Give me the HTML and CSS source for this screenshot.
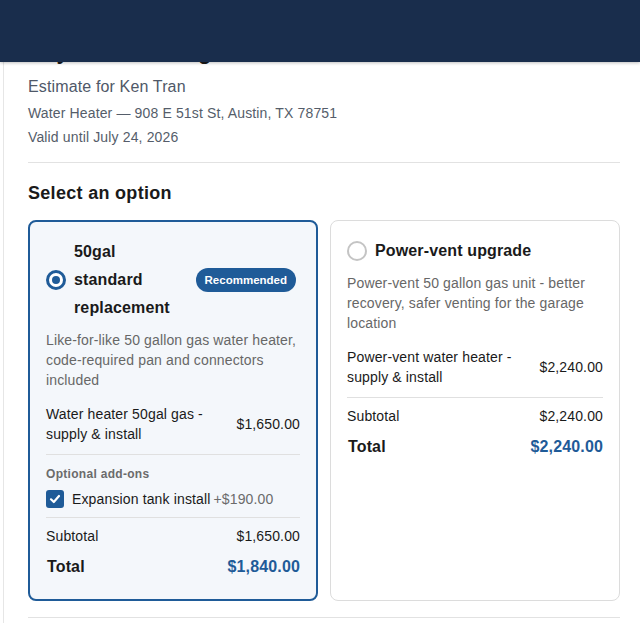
FILE: index.html
```html
<!DOCTYPE html>
<html>
	<head>
		<meta charset="utf-8">
		<title>Estimate</title>
		<link rel="stylesheet" href="styles.css">
	</head>
	<body>
		<header class="topbar"></header>
		<main class="page">
			<h1 class="brand">Bay Area Heating</h1>
			<p class="customer">Estimate for Ken Tran</p>
			<p class="meta">Water Heater — 908 E 51st St, Austin, TX 78751</p>
			<p class="meta">Valid until July 24, 2026</p>
			<hr class="rule">
			<h2 class="section-title">Select an option</h2>
			<div class="options">
				<div class="option selected">
					<div class="option-head">
						<span class="radio checked"></span>
						<span class="option-name">50gal standard replacement</span>
						<span class="badge">Recommended</span>
					</div>
					<p class="option-desc">Like-for-like 50 gallon gas water heater, code-required pan and connectors included</p>
					<div class="line">
						<span class="line-name">Water heater 50gal gas - supply &amp; install</span>
						<span class="amt">$1,650.00</span>
					</div>
					<div class="addons">
						<div class="addons-title">Optional add-ons</div>
						<div class="addon">
							<span class="check">
								<svg width="12" height="12" viewBox="0 0 12 12"><path d="M2 6.3 L4.8 9 L10 3" fill="none" stroke="#fff" stroke-width="2.2" stroke-linecap="round" stroke-linejoin="round"/></svg>
							</span>
							<span>Expansion tank install</span>
							<span class="addon-price">+$190.00</span>
						</div>
					</div>
					<div class="totals">
						<div class="row"><span>Subtotal</span><span>$1,650.00</span></div>
						<div class="row total"><span>Total</span><span class="total-amt">$1,840.00</span></div>
					</div>
				</div>
				<div class="option">
					<div class="option-head">
						<span class="radio"></span>
						<span class="option-name">Power-vent upgrade</span>
					</div>
					<p class="option-desc">Power-vent 50 gallon gas unit - better recovery, safer venting for the garage location</p>
					<div class="line">
						<span class="line-name">Power-vent water heater - supply &amp; install</span>
						<span class="amt">$2,240.00</span>
					</div>
					<div class="totals">
						<div class="row"><span>Subtotal</span><span>$2,240.00</span></div>
						<div class="row total"><span>Total</span><span class="total-amt">$2,240.00</span></div>
					</div>
				</div>
			</div>
			<hr class="rule bottom">
		</main>
	</body>
</html>
```

FILE: styles.css
```css
html, body {
	margin: 0;
	padding: 0;
	overflow: hidden;
	height: 100%;
	background: #fff;
}
body {
	font-family: "Liberation Sans", Arial, sans-serif;
	color: #1a1a1a;
	letter-spacing: 0.14px;
}
.topbar {
	position: fixed;
	top: 0; left: 0; right: 0;
	height: 62px;
	background: #192d4c;
	box-shadow: 0 1px 3px rgba(0,0,0,0.25);
	z-index: 10;
}
.page {
	margin-left: 3px;
	border-left: solid 1px #e6e6e6;
	padding: 38px 20px 40px 24px;
	min-height: 100%;
}
.brand {
	margin: 0;
	font-size: 22px;
	line-height: 28px;
}
.customer {
	margin: 9px 0 0;
	font-size: 16px;
	line-height: 24px;
	color: #4f5868;
}
.meta {
	margin: 4px 0 0;
	font-size: 14px;
	line-height: 20px;
	color: #555d6a;
}
.rule {
	border: none;
	border-top: solid 1px #e2e2e2;
	margin: 15px 0 0;
}
.rule.bottom {
	margin-top: 16px;
}
.section-title {
	margin: 18px 0 15px;
	font-size: 18px;
	line-height: 24px;
	letter-spacing: 0.3px;
}
.options {
	display: grid;
	grid-template-columns: 1fr 1fr;
	gap: 12px;
}
.option {
	border: solid 1px #dcdcdc;
	border-radius: 8px;
	padding: 16px 16px 20px;
	background: #fff;
}
.option.selected {
	border: solid 2px #1f5b98;
	background: #f4f7fb;
}
.option-head {
	display: flex;
	align-items: center;
	gap: 8px;
}
.radio {
	flex: 0 0 auto;
	width: 20px;
	height: 20px;
	box-sizing: border-box;
	border-radius: 50%;
	border: solid 2px #c4c4c4;
	background: #fff;
	display: flex;
	align-items: center;
	justify-content: center;
}
.radio.checked {
	border: solid 3px #1f5b98;
}
.radio.checked::after {
	content: "";
	width: 8px;
	height: 8px;
	border-radius: 50%;
	background: #1f5b98;
}
.option-name {
	flex: 1;
	font-size: 16px;
	line-height: 28px;
	font-weight: bold;
}
.badge {
	flex: 0 0 auto;
	margin: 0 4px;
	height: 24px;
	line-height: 24px;
	padding: 0 9px;
	border-radius: 12px;
	background: #1f5b98;
	color: #fff;
	font-size: 11.5px;
	font-weight: bold;
	letter-spacing: 0;
}
.option-desc {
	margin: 8px 0 0;
	font-size: 14px;
	line-height: 20px;
	color: #676767;
}
.line {
	margin-top: 14px;
	display: flex;
	justify-content: space-between;
	align-items: center;
	gap: 16px;
	font-size: 14px;
	line-height: 20px;
}
.amt {
	white-space: nowrap;
}
.addons {
	margin-top: 10px;
	border-top: solid 1px #e0e0e0;
	padding-top: 11px;
}
.addons-title {
	font-size: 12px;
	line-height: 16px;
	font-weight: bold;
	letter-spacing: 0.3px;
	color: #6b6b6b;
}
.addon {
	margin-top: 7px;
	display: flex;
	align-items: center;
	height: 20px;
	font-size: 14px;
}
.check {
	width: 18px;
	height: 18px;
	border-radius: 3px;
	background: #1f5b98;
	display: flex;
	align-items: center;
	justify-content: center;
	margin-right: 8px;
}
.addon-price {
	margin-left: 3px;
	color: #6b6b6b;
}
.totals {
	margin-top: 10px;
	border-top: solid 1px #e0e0e0;
	padding-top: 8px;
}
.option.selected .totals {
	margin-top: 8px;
}
.row {
	display: flex;
	justify-content: space-between;
	font-size: 14px;
	line-height: 20px;
}
.row.total {
	margin-top: 9px;
	font-size: 16px;
	line-height: 24px;
	font-weight: bold;
}
.row.total > span:first-child {
	padding-left: 1px;
}
.total-amt {
	color: #1f5b98;
}
```
